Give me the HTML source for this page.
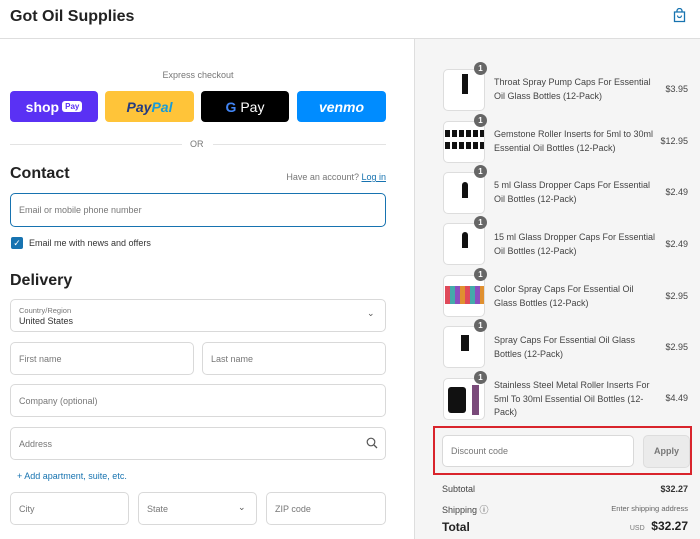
<!DOCTYPE html>
<html><head><meta charset="utf-8"><style>
*{box-sizing:border-box;margin:0;padding:0}
body{width:700px;height:539px;overflow:hidden;font-family:"Liberation Sans",Arial,sans-serif;background:#fff;position:relative;color:#333}
.a{position:absolute}
.hdr{left:0;top:0;width:700px;height:39px;border-bottom:1px solid #dedede;background:#fff}
.right{left:414px;top:39px;width:286px;height:500px;background:#f5f5f5;border-left:1px solid #dedede}
.btn{top:91px;height:31px;border-radius:4px;display:flex;align-items:center;justify-content:center;font-weight:bold}
.inp{border:1px solid #d9d9d9;border-radius:5px;background:#fff;font-size:9px;color:#777;padding-left:8px;display:flex;align-items:center}
.th{left:443px;width:42px;height:42px;border:1px solid #ddd;border-radius:5px;background:#fff;overflow:hidden}
.bd{width:13px;height:13px;border-radius:50%;background:#666;color:#fff;font-size:8px;font-weight:bold;text-align:center;line-height:13px}
.nm{left:494px;width:162px;font-size:9px;line-height:13.5px;color:#444}
.pr{right:12px;font-size:9px;color:#444}
</style></head><body>
<div class="a hdr"><div class="a" style="left:10px;top:8px;font-size:16px;font-weight:bold;color:#222">Got Oil Supplies</div>
<svg class="a" style="left:673px;top:8px" width="13" height="15" viewBox="0 0 13 15"><path d="M1.5 4h10v9.5h-10z M4 4V3a2.5 2.5 0 0 1 5 0v1" fill="none" stroke="#1773b0" stroke-width="1.3"/><path d="M4.5 7.5a2 2 0 0 0 4 0" fill="none" stroke="#1773b0" stroke-width="1.2"/></svg></div>
<div class="a" style="left:0;top:70px;width:396px;text-align:center;font-size:9px;color:#777">Express checkout</div>
<div class="a btn" style="left:10px;width:88px;background:#5a31f4;color:#fff;font-size:14px">shop<span style="background:#fff;color:#5a31f4;font-size:8px;border-radius:3px;padding:1px 3px;margin-left:3px">Pay</span></div>
<div class="a btn" style="left:105px;width:89px;background:#ffc439;font-size:14px;font-style:italic"><span style="color:#253b80">Pay</span><span style="color:#179bd7">Pal</span></div>
<div class="a btn" style="left:201px;width:88px;background:#000;color:#fff;font-size:14px;font-weight:normal"><span style="color:#4285f4;font-weight:bold">G</span>&nbsp;Pay</div>
<div class="a btn" style="left:297px;width:89px;background:#008cff;color:#fff;font-size:14px;font-style:italic">venmo</div>
<div class="a" style="left:10px;top:144px;width:172px;border-top:1px solid #e3e3e3"></div>
<div class="a" style="left:213px;top:144px;width:173px;border-top:1px solid #e3e3e3"></div>
<div class="a" style="left:190px;top:139px;font-size:9px;color:#777">OR</div>
<div class="a" style="left:10px;top:165px;font-size:16px;font-weight:bold;color:#222">Contact</div>
<div class="a" style="right:314px;top:172px;font-size:9px;color:#777">Have an account? <span style="color:#1773b0;text-decoration:underline">Log in</span></div>
<div class="a inp" style="left:10px;top:193px;width:376px;height:34px;border:1.5px solid #1773b0">Email or mobile phone number</div>
<div class="a" style="left:11px;top:237px;width:12px;height:12px;border-radius:2px;background:#1773b0;color:#fff;font-size:9px;text-align:center;line-height:12px">✓</div>
<div class="a" style="left:29px;top:238px;font-size:9px;color:#333">Email me with news and offers</div>
<div class="a" style="left:10px;top:272px;font-size:16px;font-weight:bold;color:#222">Delivery</div>
<div class="a inp" style="left:10px;top:299px;width:376px;height:33px;display:block;padding-top:6px"><div style="font-size:7.5px">Country/Region</div><div style="font-size:9px;color:#333;margin-top:1px">United States</div></div>
<div class="a" style="left:367px;top:308px;font-size:9px;color:#555">⌄</div>
<div class="a inp" style="left:10px;top:342px;width:184px;height:33px">First name</div>
<div class="a inp" style="left:202px;top:342px;width:184px;height:33px">Last name</div>
<div class="a inp" style="left:10px;top:384px;width:376px;height:33px">Company (optional)</div>
<div class="a inp" style="left:10px;top:427px;width:376px;height:33px">Address</div>
<svg class="a" style="left:366px;top:437px" width="12" height="12"><circle cx="5" cy="5" r="3.8" fill="none" stroke="#555" stroke-width="1.2"/><path d="M8 8l3 3" stroke="#555" stroke-width="1.3"/></svg>
<div class="a" style="left:17px;top:471px;font-size:9px;color:#1773b0">+ Add apartment, suite, etc.</div>
<div class="a inp" style="left:10px;top:492px;width:119px;height:33px">City</div>
<div class="a inp" style="left:138px;top:492px;width:119px;height:33px">State</div>
<div class="a" style="left:238px;top:502px;font-size:9px;color:#555">⌄</div>
<div class="a inp" style="left:266px;top:492px;width:120px;height:33px">ZIP code</div>

<div class="a right"></div>
<div class="a th" style="top:69px"><div class="a" style="left:18px;top:4px;width:6px;height:20px;background:#111"></div></div>
<div class="a th" style="top:121px"><div class="a" style="left:1px;top:8px;width:40px;height:7px;background:repeating-linear-gradient(90deg,#111 0 5px,#fff 5px 7px)"></div><div class="a" style="left:1px;top:20px;width:40px;height:7px;background:repeating-linear-gradient(90deg,#111 0 5px,#fff 5px 7px)"></div></div>
<div class="a th" style="top:172px"><div class="a" style="left:18px;top:9px;width:6px;height:16px;background:#111;border-radius:3px 3px 0 0"></div></div>
<div class="a th" style="top:223px"><div class="a" style="left:18px;top:8px;width:6px;height:16px;background:#111;border-radius:3px 3px 0 0"></div></div>
<div class="a th" style="top:275px"><div class="a" style="left:1px;top:10px;width:40px;height:18px;background:repeating-linear-gradient(90deg,#e04a5a 0 5px,#4aa 5px 10px,#8a4fc0 10px 15px,#e09030 15px 20px)"></div></div>
<div class="a th" style="top:326px"><div class="a" style="left:17px;top:8px;width:8px;height:16px;background:#111"></div></div>
<div class="a th" style="top:378px"><div class="a" style="left:4px;top:8px;width:18px;height:26px;background:#111;border-radius:3px"></div><div class="a" style="left:28px;top:6px;width:7px;height:30px;background:#7a4a7a"></div></div>
<div class="a bd" style="left:474px;top:62px">1</div>
<div class="a bd" style="left:474px;top:114px">1</div>
<div class="a bd" style="left:474px;top:165px">1</div>
<div class="a bd" style="left:474px;top:216px">1</div>
<div class="a bd" style="left:474px;top:268px">1</div>
<div class="a bd" style="left:474px;top:319px">1</div>
<div class="a bd" style="left:474px;top:371px">1</div>
<div class="a nm" style="top:76px">Throat Spray Pump Caps For Essential Oil Glass Bottles (12-Pack)</div><div class="a pr" style="top:84px">$3.95</div>
<div class="a nm" style="top:128px">Gemstone Roller Inserts for 5ml to 30ml Essential Oil Bottles (12-Pack)</div><div class="a pr" style="top:136px">$12.95</div>
<div class="a nm" style="top:179px">5 ml Glass Dropper Caps For Essential Oil Bottles (12-Pack)</div><div class="a pr" style="top:187px">$2.49</div>
<div class="a nm" style="top:231px">15 ml Glass Dropper Caps For Essential Oil Bottles (12-Pack)</div><div class="a pr" style="top:239px">$2.49</div>
<div class="a nm" style="top:283px">Color Spray Caps For Essential Oil Glass Bottles (12-Pack)</div><div class="a pr" style="top:291px">$2.95</div>
<div class="a nm" style="top:334px">Spray Caps For Essential Oil Glass Bottles (12-Pack)</div><div class="a pr" style="top:342px">$2.95</div>
<div class="a nm" style="top:379px">Stainless Steel Metal Roller Inserts For 5ml To 30ml Essential Oil Bottles (12-Pack)</div><div class="a pr" style="top:393px">$4.49</div>
<div class="a" style="left:433px;top:426px;width:259px;height:49px;border:2px solid #d9242c"></div>
<div class="a inp" style="left:442px;top:435px;width:192px;height:32px">Discount code</div>
<div class="a" style="left:643px;top:435px;width:47px;height:33px;border:1px solid #ddd;border-radius:5px;background:#ebebeb;font-size:9px;font-weight:bold;color:#777;text-align:center;line-height:31px">Apply</div>
<div class="a" style="left:442px;top:484px;font-size:9px;color:#444">Subtotal</div><div class="a" style="right:12px;top:484px;font-size:9px;font-weight:bold;color:#333">$32.27</div>
<div class="a" style="left:442px;top:503px;font-size:9px;color:#444">Shipping ⓘ</div><div class="a" style="right:12px;top:504px;font-size:7.5px;color:#666">Enter shipping address</div>
<div class="a" style="left:442px;top:520px;font-size:12px;font-weight:bold;color:#222">Total</div><div class="a" style="right:12px;top:519px;font-size:12px;font-weight:bold;color:#222"><span style="font-size:7px;font-weight:normal;color:#777">USD</span>&nbsp; $32.27</div>
</body></html>
